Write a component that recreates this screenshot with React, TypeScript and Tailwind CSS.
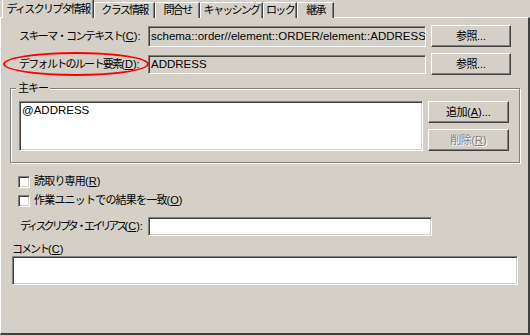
import React from 'react';

const FONT = { fontFamily: '"Liberation Sans", "Noto Sans CJK JP", sans-serif' };

// mnemonic suffix like (C): — kept at normal letter spacing
const Key = ({ k, colon, dots }: { k: string; colon?: boolean; dots?: boolean }) => (
  <span className="tracking-normal">
    (<u>{k}</u>){colon ? ':' : ''}
    {dots ? '...' : ''}
  </span>
);

const Tab = ({ label, active, className }: { label: string; active?: boolean; className: string }) => (
  <div
    className={
      (active ? 'relative z-10 h-[19px] pt-[1px] leading-[16px] ' : 'h-[16px] leading-[15px] ') +
      'flex justify-center border-t border-l border-white border-r border-r-[#404040] bg-[#d4d0c8] shadow-[inset_-1px_0_0_#808080] whitespace-nowrap ' +
      className
    }
  >
    {label}
  </div>
);

const Button = ({ children, disabled, className }: { children: React.ReactNode; disabled?: boolean; className?: string }) => (
  <div
    className={
      'flex items-center justify-center h-[22px] w-[80px] border border-t-white border-l-white border-r-[#404040] border-b-[#404040] shadow-[inset_-1px_-1px_0_#808080] tracking-[-0.5px] whitespace-nowrap ' +
      (disabled ? 'text-[#808080] [text-shadow:1px_1px_0_#fff] ' : 'text-black ') +
      (className ?? '')
    }
  >
    {children}
  </div>
);

const Sunken = ({ children, white, className }: { children?: React.ReactNode; white?: boolean; className?: string }) => (
  <div
    className={
      'border border-t-[#808080] border-l-[#808080] border-r-white border-b-white shadow-[inset_1px_1px_0_#404040,inset_-1px_-1px_0_#d4d0c8] overflow-hidden whitespace-nowrap ' +
      (white ? 'bg-white ' : 'bg-[#d4d0c8] ') +
      (className ?? '')
    }
  >
    {children}
  </div>
);

const Checkbox = ({ children }: { children: React.ReactNode }) => (
  <div className="flex items-center ml-[17px] h-[13px]">
    <div className="w-[12px] h-[12px] bg-white border border-t-[#808080] border-l-[#808080] border-r-white border-b-white shadow-[inset_1px_1px_0_#404040,inset_-1px_-1px_0_#d4d0c8]" />
    <span className="ml-[4px] tracking-[-0.8px] whitespace-nowrap">{children}</span>
  </div>
);

export default function App() {
  return (
    <div className="relative w-[530px] h-[336px] bg-[#d4d0c8] text-[11px] text-black overflow-hidden" style={FONT}>
      {/* tabs */}
      <div className="flex items-end h-[18px] pl-[2px] tracking-[-1.7px]">
        <Tab label="ディスクリプタ情報" active className="w-[92px]" />
        <Tab label="クラス情報" className="w-[61px]" />
        <Tab label="問合せ" className="w-[45px]" />
        <Tab label="キャッシング" className="w-[63px]" />
        <Tab label="ロック" className="w-[34px]" />
        <Tab label="継承" className="w-[37px]" />
      </div>

      {/* panel */}
      <div className="-mt-[1px] h-[318px] w-[530px] border-t border-l border-white border-r-2 border-b-2 border-r-[#404040] border-b-[#404040] flex flex-col">
        <div className="flex items-center mt-[7px] h-[22px]">
          <div className="w-[129px] ml-[18px] tracking-[-1.6px] whitespace-nowrap">
            スキーマ・コンテキスト<Key k="C" colon />
          </div>
          <Sunken className="w-[278px] h-[21px] pl-[2px] leading-[19px] text-[11.5px]">schema::order//element::ORDER/element::ADDRESS</Sunken>
          <Button className="ml-[5px]">
            参照<span className="tracking-normal">...</span>
          </Button>
        </div>
        <div className="flex items-center mt-[6px] h-[22px]">
          <div className="w-[129px] ml-[18px] tracking-[-1.7px] whitespace-nowrap">
            デフォルトのルート要素<Key k="D" colon />
          </div>
          <Sunken className="w-[278px] h-[19px] pl-[2px] leading-[17px] text-[11.5px]">ADDRESS</Sunken>
          <Button className="ml-[5px]">
            参照<span className="tracking-normal">...</span>
          </Button>
        </div>

        {/* group box */}
        <div className="relative mt-[13px] ml-[9px] w-[510px] h-[75px] border border-[#808080] shadow-[1px_1px_0_#fff,inset_1px_1px_0_#fff]">
          <div className="absolute -top-[8px] left-[5px] px-[2px] bg-[#d4d0c8] leading-[14px] tracking-[-1px]">主キー</div>
          <div className="flex mt-[12px] ml-[8px]">
            <Sunken white className="w-[404px] h-[50px] pl-[2px] pt-[1px] leading-[14px] text-[11.5px]">@ADDRESS</Sunken>
            <div className="flex flex-col ml-[5px] gap-[6px]">
              <Button className="w-[81px]">
                追加<Key k="A" dots />
              </Button>
              <Button disabled className="w-[81px]">
                削除<Key k="R" />
              </Button>
            </div>
          </div>
        </div>

        <div className="mt-[12px]">
          <Checkbox>
            読取り専用<Key k="R" />
          </Checkbox>
        </div>
        <div className="mt-[6px]">
          <Checkbox>
            作業ユニットでの結果を一致<Key k="O" />
          </Checkbox>
        </div>

        <div className="flex items-center mt-[10px] h-[19px]">
          <div className="w-[128px] ml-[19px] tracking-[-2.9px] whitespace-nowrap">
            ディスクリプタ・エイリアス<Key k="C" colon />
          </div>
          <Sunken white className="w-[284px] h-[19px]" />
        </div>

        <div className="mt-[7px] ml-[11px] h-[13px] leading-[13px] tracking-[-2px]">
          コメント<Key k="C" />
        </div>
        <Sunken white className="ml-[11px] w-[506px] h-[29px]" />
      </div>

      {/* red annotation ellipse */}
      <div className="absolute left-[3px] top-[52px] w-[146px] h-[24px] rounded-[50%] border-2 border-[#ff0000]" />
    </div>
  );
}
